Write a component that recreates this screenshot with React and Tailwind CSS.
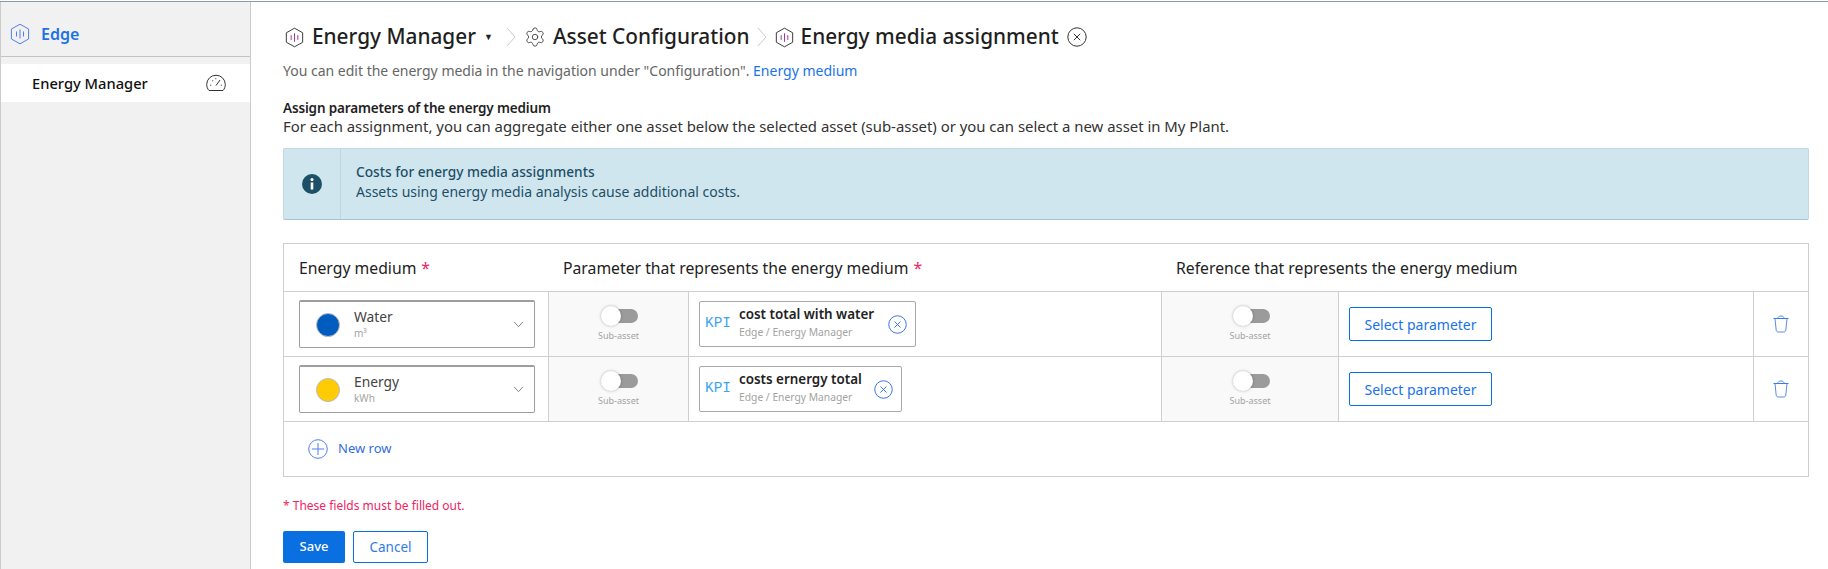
import React from "react";
import { Settings } from "lucide-react";

const font = { fontFamily: '"Noto Sans", "Open Sans", sans-serif' };

function Hex({ className = "", stroke = "#333", bars = "#9b2c9b" }) {
  return (
    <svg viewBox="0 0 20 22" className={className} fill="none">
      <path d="M10 1.2 18.6 6v10L10 20.8 1.4 16V6z" stroke={stroke} strokeWidth="1" />
      <path d="M6.5 8.5v5M10 6.5v9M13.5 8.5v5" stroke={bars} strokeWidth="1" />
    </svg>
  );
}

function Chevron() {
  return (
    <svg viewBox="0 0 12 24" className="w-[12px] h-[24px]" fill="none">
      <path d="M2 3l8 9-8 9" stroke="#c9c9c9" strokeWidth="1" />
    </svg>
  );
}

function XCircle({ className = "", color = "#333" }) {
  return (
    <svg viewBox="0 0 20 20" className={className} fill="none" stroke={color} strokeWidth="1">
      <circle cx="10" cy="10" r="9.2" />
      <path d="M6.8 6.8l6.4 6.4M13.2 6.8l-6.4 6.4" />
    </svg>
  );
}

function Toggle() {
  return (
    <div className="flex flex-col items-center justify-center h-full">
      <div className="relative w-[37px] h-[20px] flex items-center ml-[2px]">
        <div className="ml-[8px] w-[29px] h-[14px] rounded-full bg-[#9b9b9b]" />
        <div className="absolute left-0 top-0 w-[20px] h-[20px] rounded-full bg-white shadow-[0_0_3px_rgba(0,0,0,0.3)]" />
      </div>
      <div className="mt-[3px] text-[9px] leading-[14px] text-[#a3a3a3]">Sub-asset</div>
    </div>
  );
}

function MediumSelect({ name, unit, color }) {
  return (
    <div className="flex items-center w-[236px] h-[48px] ml-[15px] rounded-[2px] border border-[#9e9e9e] border-t-2 bg-white">
      <div className="ml-[16px] w-[24px] h-[24px] rounded-full border border-[#bbbbbb]" style={{ backgroundColor: color }} />
      <div className="ml-[14px] flex-1 flex flex-col -mt-[2px]">
        <span className="text-[13.8px] leading-[18px] text-[#444]">{name}</span>
        <span className="text-[10px] leading-[14px] text-[#a3a3a3]">{unit}</span>
      </div>
      <svg viewBox="0 0 12 8" className="w-[11px] h-[7px] mr-[10px]" fill="none">
        <path d="M1 1l5 5.5L11 1" stroke="#777" strokeWidth="1" />
      </svg>
    </div>
  );
}

function KpiChip({ title, width }) {
  return (
    <div
      className="flex ml-[10px] h-[46px] rounded-[2px] border border-[#a9a9a9] bg-white items-center"
      style={{ width }}
    >
      <span className="ml-[5px] w-[34px] text-[14.4px] text-[#3ba4f0]" style={{ fontFamily: '"Liberation Mono", monospace' }}>
        KPI
      </span>
      <div className="flex-1 flex flex-col">
        <span className="text-[13.4px] leading-[18px] font-semibold text-[#222] whitespace-nowrap -mt-[5px]">{title}</span>
        <span className="mt-[2px] text-[10.3px] leading-[14px] text-[#a3a3a3] whitespace-nowrap">Edge / Energy Manager</span>
      </div>
      <XCircle className="w-[19px] h-[19px] mr-[8px]" color="#2f6fe0" />
    </div>
  );
}

function Trash() {
  return (
    <svg viewBox="0 0 16 18" className="w-[16px] h-[18px]" fill="none" stroke="#5b8be8" strokeWidth="1">
      <path d="M.5 3.5h15" stroke="#2f7be5" />
      <path d="M5 3.5C5 1.8 6 1 8 1s3 .8 3 2.5" />
      <path d="M2 3.5l1.2 11.7c.1 1.2 1 1.8 2 1.8h5.6c1 0 1.9-.6 2-1.8L14 3.5" />
    </svg>
  );
}

function Row({ name, unit, color, title, chipWidth }) {
  const cell = "border-b border-[#cfcfcf] flex items-center";
  return (
    <>
      <div className={cell}>
        <MediumSelect name={name} unit={unit} color={color} />
      </div>
      <div className="border-b border-l border-r border-[#cfcfcf] bg-[#f9f9f9]">
        <Toggle />
      </div>
      <div className={cell}>
        <KpiChip title={title} width={chipWidth} />
      </div>
      <div className="border-b border-l border-r border-[#cfcfcf] bg-[#f9f9f9]">
        <Toggle />
      </div>
      <div className={cell}>
        <button className="ml-[10px] w-[143px] h-[34px] pt-[1px] rounded-[2px] border border-[#0a6fe0] text-[14px] text-[#1a73e8] bg-white">
          Select parameter
        </button>
      </div>
      <div className="border-b border-l border-[#cfcfcf] flex items-center justify-center">
        <Trash />
      </div>
    </>
  );
}

export default function App() {
  return (
    <div className="h-[569px] w-[1828px] overflow-hidden bg-white pt-px" style={font}>
      <div className="h-full border-t border-[#8d9aa5] flex">
        <aside className="w-[251px] shrink-0 h-full bg-[#f1f1f1] border-l border-r border-[#cccccc]">
          <div className="h-[55px] flex items-center pl-[9px] pt-[9px] border-b border-[#c4c4c4]">
            <Hex className="w-[20px] h-[22px]" stroke="#4f7ff0" bars="#4f7ff0" />
            <span className="ml-[11px] text-[16px] font-semibold text-[#1a73e8]">Edge</span>
          </div>
          <div className="mt-[7px] h-[38px] bg-white flex items-center justify-between pl-[31px] pr-[24px]">
            <span className="text-[14.7px] font-medium text-[#111]">Energy Manager</span>
            <svg viewBox="0 0 20 18" className="w-[20px] h-[18px]" fill="none" stroke="#333" strokeWidth="1">
              <path d="M3 16.5C1.6 15 .7 12.8.7 10.5a9.3 9.3 0 0 1 18.6 0c0 2.3-.9 4.5-2.3 6z" />
              <path d="M10 11.5l4-5.5" />
              <path d="M4.2 11.2h1M14.8 11.2h1M6.2 6.8h1M9.8 4.2v1" />
            </svg>
          </div>
        </aside>

        <main className="flex-1 pl-[32px] pr-[20px]">
          <div className="h-[24px] mt-[23px] flex items-center text-[20.8px] text-[#1f1f1f] whitespace-nowrap">
            <Hex className="w-[19px] h-[21px] ml-[2px]" />
            <span className="ml-[8px] font-medium">Energy Manager</span>
            <span className="ml-[8px] text-[9px] text-[#222]">▼</span>
            <span className="ml-[12px]"><Chevron /></span>
            <span className="ml-[7px]"><Settings size={22} strokeWidth={1} color="#444" /></span>
            <span className="ml-[7px] font-medium">Asset Configuration</span>
            <span className="ml-[6px]"><Chevron /></span>
            <Hex className="w-[19px] h-[21px] ml-[7px]" />
            <span className="ml-[7px] font-medium">Energy media assignment</span>
            <XCircle className="w-[20px] h-[20px] ml-[8px]" />
          </div>

          <p className="mt-[12px] text-[14px] leading-[20px] text-[#666] whitespace-nowrap">
            You can edit the energy media in the navigation under "Configuration". <span className="text-[#1a73e8]">Energy medium</span>
          </p>

          <h2 className="mt-[18px] text-[13.5px] tracking-[-0.15px] leading-[18px] font-semibold text-[#1f1f1f]">Assign parameters of the energy medium</h2>
          <p className="text-[14.9px] leading-[18px] text-[#333] whitespace-nowrap">
            For each assignment, you can aggregate either one asset below the selected asset (sub-asset) or you can select a new asset in My Plant.
          </p>

          <div className="mt-[13px] h-[72px] flex rounded-[2px] bg-[#d0e6ef] border border-[#c4d8e0] border-b-[#a8c3cf]">
            <div className="w-[57px] flex items-center justify-center border-r border-[#bdd6e0]">
              <svg viewBox="0 0 20 20" className="w-[20px] h-[20px]">
                <circle cx="10" cy="10" r="10" fill="#1d4f66" />
                <rect x="8.7" y="8.5" width="2.6" height="7" fill="#fff" />
                <circle cx="10" cy="5.6" r="1.5" fill="#fff" />
              </svg>
            </div>
            <div className="pl-[15px] pt-[13px] text-[14px] leading-[20px] text-[#1d4f66]">
              <div className="font-medium text-[13.7px]">Costs for energy media assignments</div>
              <div>Assets using energy media analysis cause additional costs.</div>
            </div>
          </div>

          <div className="mt-[23px] border border-[#cfcfcf] w-[1526px]">
            <div className="grid grid-cols-[264px_141px_472px_178px_414px_55px] grid-rows-[48px_65px_65px]">
              <div className="border-b border-[#cfcfcf] flex items-center pl-[15px] pt-[3px] text-[15.75px] text-[#222]">
                Energy medium <span className="ml-[5px] text-[#f0245f]">*</span>
              </div>
              <div className="col-span-2 border-b border-[#cfcfcf] flex items-center pl-[15px] pt-[3px] text-[15.75px] text-[#222]">
                Parameter that represents the energy medium <span className="ml-[5px] text-[#f0245f]">*</span>
              </div>
              <div className="col-span-3 border-b border-[#cfcfcf] flex items-center pl-[15px] pt-[3px] text-[15.75px] text-[#222]">
                Reference that represents the energy medium
              </div>
              <Row name="Water" unit="m³" color="#005cbf" title="cost total with water" chipWidth="217px" />
              <Row name="Energy" unit="kWh" color="#ffcb05" title="costs ernergy total" chipWidth="203px" />
            </div>
            <div className="h-[54px] flex items-center pl-[24px]">
              <svg viewBox="0 0 20 20" className="w-[20px] h-[20px]" fill="none" stroke="#4f7ff0" strokeWidth="1">
                <circle cx="10" cy="10" r="9.3" />
                <path d="M10 4v12M4 10h12" />
              </svg>
              <span className="ml-[10px] text-[13px] text-[#2f6fe0]">New row</span>
            </div>
          </div>

          <p className="mt-[21px] text-[12px] leading-[16px] text-[#f0245f]">* These fields must be filled out.</p>

          <div className="mt-[17px] flex gap-[8px]">
            <button className="w-[62px] h-[32px] rounded-[2px] bg-[#0a6fe0] text-[13px] font-medium text-white">Save</button>
            <button className="w-[75px] h-[32px] rounded-[2px] border border-[#0a6fe0] bg-white text-[13.5px] text-[#2f7be5]">Cancel</button>
          </div>
        </main>
      </div>
    </div>
  );
}
